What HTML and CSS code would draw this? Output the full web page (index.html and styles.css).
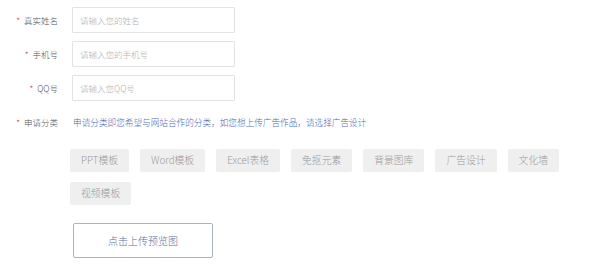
FILE: index.html
```html
<!DOCTYPE html>
<html lang="zh-CN">
<head>
    <meta charset="UTF-8">
    <title>申请合作</title>
    <link rel="stylesheet" href="styles.css">
</head>
<body>
    <form class="apply-form">
        <div class="form-row">
            <label class="form-label"><span class="required">*</span>真实姓名</label>
            <input class="form-input" type="text" placeholder="请输入您的姓名">
        </div>
        <div class="form-row">
            <label class="form-label"><span class="required">*</span>手机号</label>
            <input class="form-input" type="text" placeholder="请输入您的手机号">
        </div>
        <div class="form-row">
            <label class="form-label"><span class="required">*</span>QQ号</label>
            <input class="form-input" type="text" placeholder="请输入您QQ号">
        </div>
        <div class="form-row category-row">
            <label class="form-label"><span class="required">*</span>申请分类</label>
            <p class="category-tip">申请分类即您希望与网站合作的分类，如您想上传广告作品，请选择广告设计</p>
        </div>

        <!-- 分类标签 -->
        <ul class="tag-list">
            <li class="tag">PPT模板</li>
            <li class="tag">Word模板</li>
            <li class="tag">Excel表格</li>
            <li class="tag">免抠元素</li>
            <li class="tag">背景图库</li>
            <li class="tag">广告设计</li>
            <li class="tag">文化墙</li>
            <li class="tag">视频模板</li>
        </ul>

        <button type="button" class="upload-btn">点击上传预览图</button>
    </form>
</body>
</html>
```

FILE: styles.css
```css
/* General */
body {
    margin: 0;
    padding: 0;
    background: #fff;
    font-family: "Noto Sans CJK SC", "Noto Sans", sans-serif;
    font-weight: 300;
    color: #333;
}

.apply-form {
    padding-top: 7px;
}

.form-row {
    display: flex;
    align-items: center;
    height: 26px;
    margin-bottom: 8px;
}

.form-label {
    width: 58px;
    text-align: right;
    font-size: 8.5px;
    color: #555;
    flex-shrink: 0;
}

.required {
    color: #d9363e;
    margin-right: 4px;
}

.form-input {
    box-sizing: border-box;
    width: 163px;
    height: 26px;
    margin: 0 0 0 14px;
    padding: 0 7px;
    border: 1px solid #e3e3e3;
    border-radius: 1px;
    font-family: inherit;
    font-weight: 300;
    font-size: 8.5px;
    color: #333;
    outline: none;
}

.form-input::placeholder {
    color: #b0b0b0;
}

.category-row {
    margin-bottom: 14px;
}

.category-tip {
    margin: 0 0 0 15px;
    font-size: 8.65px;
    color: #4a6ab3;
    white-space: nowrap;
}

/* Tags */
.tag-list {
    list-style: none;
    margin: 0 0 0 70px;
    padding: 0;
    width: 520px;
    display: flex;
    flex-wrap: wrap;
    gap: 10px 11px;
}

.tag {
    height: 23px;
    line-height: 23px;
    padding: 0 11px;
    background: #efefef;
    border-radius: 2px;
    font-size: 9.8px;
    color: #9a9a9a;
}

/* Upload button */
.upload-btn {
    display: block;
    box-sizing: border-box;
    width: 140px;
    height: 35px;
    margin: 18px 0 0 73px;
    background: #fff;
    border: 1px solid #aab3cb;
    border-radius: 2px;
    font-family: inherit;
    font-weight: 300;
    font-size: 10px;
    color: #5d6d9c;
    cursor: pointer;
}
```
